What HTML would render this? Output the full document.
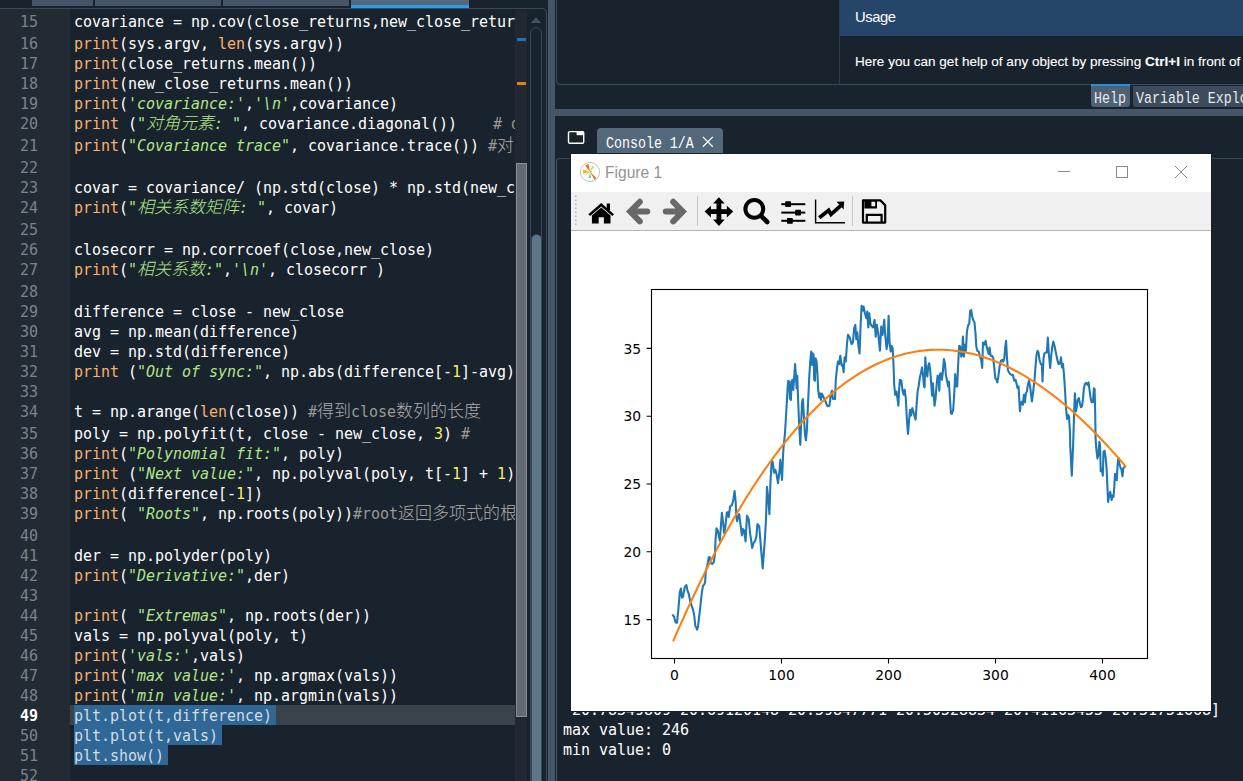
<!DOCTYPE html>
<html lang="zh">
<head>
<meta charset="utf-8">
<title>Spyder - Figure 1</title>
<style>
html,body{margin:0;padding:0;}
body{width:1243px;height:781px;overflow:hidden;background:#19232d;position:relative;font-family:"DejaVu Sans Mono","Liberation Mono","Noto Sans CJK SC",monospace;}
.abs{position:absolute;}
/* editor tabs */
.tab{position:absolute;top:0;height:6px;background:#475667;}
.tab.act{background:#54687b;height:5px;border-bottom:3px solid #2b9cec;}
/* editor frame */
#edframe{position:absolute;left:-10px;top:8px;width:557px;height:790px;border:1px solid #3a4959;border-radius:5px;box-sizing:border-box;}
#gutter{position:absolute;left:0;top:9px;width:70px;height:772px;background:#222a34;}
#gutter .ln{font-size:15px;line-height:22px;color:#7b838b;text-align:right;padding-right:32px;letter-spacing:-0.03px;}
#gutter .ln.cur{color:#ffffff;font-weight:bold;}
#gutpad,#codepad{height:1.5px;}
#code{position:absolute;left:70px;top:9px;width:445px;height:772px;overflow:hidden;color:#ffffff;}
#code .cl{font-size:15px;line-height:22px;white-space:pre;padding-left:4px;letter-spacing:-0.03px;}
#code .cl.curline{background:#3a424b;}
.k{color:#fab16c;}
.s{color:#b0e686;font-style:italic;}
.c{color:#999999;}
.d{color:#faed5c;}
.z{line-height:0;font-weight:300;font-family:"Noto Sans CJK SC","WenQuanYi Zen Hei",sans-serif;font-size:17px;position:relative;top:0.5px;}
.c .z{color:#adadad;}
.sel{background:#2f6796;color:#d4dce4;display:inline-block;height:20px;padding-right:4px;vertical-align:top;}
/* scroll flag area */
#flags{position:absolute;left:515px;top:10px;width:12px;height:771px;background:#222831;}
#flagslider{position:absolute;left:516px;top:163px;width:11px;height:554px;background:#646a72;border:1px solid #8a8f96;box-sizing:border-box;}
/* scrollbar */
#sbgroove{position:absolute;left:530px;top:27px;width:12px;height:780px;border:1px solid #3a4959;border-radius:6px;box-sizing:border-box;}
#sbhandle{position:absolute;left:530.5px;top:233.5px;width:11px;height:600px;background:#5f7689;border:1.5px solid #34475a;box-sizing:border-box;border-radius:6px;}
/* splitters */
#vsplit{position:absolute;left:548px;top:0;width:7px;height:781px;background:#465567;}
#hsplit{position:absolute;left:555px;top:109px;width:688px;height:7px;background:#465567;}
/* help pane */
#helpframe{position:absolute;left:556px;top:-6px;width:700px;height:90.5px;border:1px solid #3a4959;border-radius:4px;box-sizing:border-box;}
#usagehead{position:absolute;left:840px;top:0;width:403px;height:36px;background:#254569;}
#usageleft{position:absolute;left:839px;top:0;width:1px;height:84px;background:#2e3d4c;}
#usagetitle{position:absolute;left:855px;top:7px;letter-spacing:-0.45px;font-family:"Liberation Sans",sans-serif;font-size:14.8px;color:#ffffff;line-height:20px;}
#usagetext{position:absolute;left:855px;top:52px;-webkit-text-stroke:0.1px #fff;font-family:"Liberation Sans",sans-serif;font-size:13.55px;color:#ffffff;line-height:20px;white-space:pre;}
/* bottom tabs of help pane */
.btab{position:absolute;top:86px;height:21px;font-family:"Liberation Mono",monospace;font-size:13.3px;line-height:22px;color:#e6ebf0;white-space:pre;background:#3d4b5b;border-radius:0 0 3px 3px;}
#tabhelp{left:1091px;width:39px;background:#4f6174;border-top:2px solid #2a8fdc;box-sizing:border-box;top:84px;height:23px;padding-left:3px;}
#tabvar{left:1133px;width:120px;padding-left:3px;}
.btab span{display:inline-block;transform:scaleY(1.225) translateY(2.2px);transform-origin:50% 60%;}
/* console */
#constab{position:absolute;left:597px;top:128px;width:126px;height:30px;background:#54687b;border-radius:4px 4px 0 0;}
#constab span{position:absolute;left:9px;top:6.3px;transform:scaleY(1.27);transform-origin:50% 60%;font-family:"Liberation Mono",monospace;font-size:13.3px;line-height:22px;color:#ffffff;white-space:pre;}
#consframe{position:absolute;left:556px;top:158px;width:700px;height:640px;border:1px solid #3a4959;border-left-color:#44546a;border-radius:4px;box-sizing:border-box;}
.cons{position:absolute;left:563px;font-size:15px;line-height:20px;color:#ffffff;white-space:pre;letter-spacing:-0.03px;}
/* figure window */
#fig{position:absolute;left:570px;top:153px;width:642px;height:559px;background:#ffffff;border:1px solid #18212a;box-sizing:border-box;}
#figtitle{position:absolute;left:0;top:0;width:640px;height:38px;background:#ffffff;}
#figtitle .t{position:absolute;left:34px;top:8px;font-family:"Liberation Sans",sans-serif;font-size:15.6px;line-height:22px;color:#949494;}
#figtool{position:absolute;left:0;top:38px;width:640px;height:38px;background:#f0f0f0;border-bottom:1px solid #b4b4b4;}
#canvas{position:absolute;left:0;top:77px;width:640px;height:480px;background:#fff;}
</style>
</head>
<body>
<!-- editor tabs -->
<div class="tab" style="left:32px;width:61px"></div>
<div class="tab" style="left:95px;width:126px"></div>
<div class="tab" style="left:223px;width:126px"></div>
<div class="tab act" style="left:351px;width:118px"></div>

<div id="gutter"><div id="gutpad"></div>
<div class="ln" style="height:22px">15</div>
<div class="ln" style="height:20px">16</div>
<div class="ln" style="height:20px">17</div>
<div class="ln" style="height:20px">18</div>
<div class="ln" style="height:20px">19</div>
<div class="ln" style="height:22px">20</div>
<div class="ln" style="height:22px">21</div>
<div class="ln" style="height:20px">22</div>
<div class="ln" style="height:20px">23</div>
<div class="ln" style="height:22px">24</div>
<div class="ln" style="height:20px">25</div>
<div class="ln" style="height:20px">26</div>
<div class="ln" style="height:22px">27</div>
<div class="ln" style="height:20px">28</div>
<div class="ln" style="height:20px">29</div>
<div class="ln" style="height:20px">30</div>
<div class="ln" style="height:20px">31</div>
<div class="ln" style="height:20px">32</div>
<div class="ln" style="height:20px">33</div>
<div class="ln" style="height:22px">34</div>
<div class="ln" style="height:20px">35</div>
<div class="ln" style="height:20px">36</div>
<div class="ln" style="height:20px">37</div>
<div class="ln" style="height:20px">38</div>
<div class="ln" style="height:22px">39</div>
<div class="ln" style="height:20px">40</div>
<div class="ln" style="height:20px">41</div>
<div class="ln" style="height:20px">42</div>
<div class="ln" style="height:20px">43</div>
<div class="ln" style="height:20px">44</div>
<div class="ln" style="height:20px">45</div>
<div class="ln" style="height:20px">46</div>
<div class="ln" style="height:20px">47</div>
<div class="ln" style="height:20px">48</div>
<div class="ln cur" style="height:20px">49</div>
<div class="ln" style="height:20px">50</div>
<div class="ln" style="height:20px">51</div>
<div class="ln" style="height:20px">52</div>
</div>
<div id="code"><div id="codepad"></div>
<div class="cl" style="height:22px">covariance = np.cov(close_returns,new_close_returns) <span class="c">#<span class="z">协方差</span></span></div>
<div class="cl" style="height:20px"><span class="k">print</span>(sys.argv, <span class="k">len</span>(sys.argv))</div>
<div class="cl" style="height:20px"><span class="k">print</span>(close_returns.mean())</div>
<div class="cl" style="height:20px"><span class="k">print</span>(new_close_returns.mean())</div>
<div class="cl" style="height:20px"><span class="k">print</span>(<span class="s">'covariance:'</span>,<span class="s">'\n'</span>,covariance)</div>
<div class="cl" style="height:22px"><span class="k">print</span> (<span class="s">"<span class="z">对角元素</span>: "</span>, covariance.diagonal())    <span class="c"># diagonal <span class="z">对角线</span></span></div>
<div class="cl" style="height:22px"><span class="k">print</span>(<span class="s">"Covariance trace"</span>, covariance.trace()) <span class="c">#<span class="z">对角线元素和</span></span></div>
<div class="cl" style="height:20px"></div>
<div class="cl" style="height:20px">covar = covariance/ (np.std(close) * np.std(new_close))</div>
<div class="cl" style="height:22px"><span class="k">print</span>(<span class="s">"<span class="z">相关系数矩阵</span>: "</span>, covar)</div>
<div class="cl" style="height:20px"></div>
<div class="cl" style="height:20px">closecorr = np.corrcoef(close,new_close)</div>
<div class="cl" style="height:22px"><span class="k">print</span>(<span class="s">"<span class="z">相关系数</span>:"</span>,<span class="s">'\n'</span>, closecorr )</div>
<div class="cl" style="height:20px"></div>
<div class="cl" style="height:20px">difference = close - new_close</div>
<div class="cl" style="height:20px">avg = np.mean(difference)</div>
<div class="cl" style="height:20px">dev = np.std(difference)</div>
<div class="cl" style="height:20px"><span class="k">print</span> (<span class="s">"Out of sync:"</span>, np.abs(difference[-<span class="d">1</span>]-avg)/dev)</div>
<div class="cl" style="height:20px"></div>
<div class="cl" style="height:22px">t = np.arange(<span class="k">len</span>(close)) <span class="c">#<span class="z">得到</span>close<span class="z">数列的长度</span></span></div>
<div class="cl" style="height:20px">poly = np.polyfit(t, close - new_close, <span class="d">3</span>) <span class="c">#</span></div>
<div class="cl" style="height:20px"><span class="k">print</span>(<span class="s">"Polynomial fit:"</span>, poly)</div>
<div class="cl" style="height:20px"><span class="k">print</span> (<span class="s">"Next value:"</span>, np.polyval(poly, t[-<span class="d">1</span>] + <span class="d">1</span>))</div>
<div class="cl" style="height:20px"><span class="k">print</span>(difference[-<span class="d">1</span>])</div>
<div class="cl" style="height:22px"><span class="k">print</span>( <span class="s">"Roots"</span>, np.roots(poly))<span class="c">#root<span class="z">返回多项式的根</span></span></div>
<div class="cl" style="height:20px"></div>
<div class="cl" style="height:20px">der = np.polyder(poly)</div>
<div class="cl" style="height:20px"><span class="k">print</span>(<span class="s">"Derivative:"</span>,der)</div>
<div class="cl" style="height:20px"></div>
<div class="cl" style="height:20px"><span class="k">print</span>( <span class="s">"Extremas"</span>, np.roots(der))</div>
<div class="cl" style="height:20px">vals = np.polyval(poly, t)</div>
<div class="cl" style="height:20px"><span class="k">print</span>(<span class="s">'vals:'</span>,vals)</div>
<div class="cl" style="height:20px"><span class="k">print</span>(<span class="s">'max value:'</span>, np.argmax(vals))</div>
<div class="cl" style="height:20px"><span class="k">print</span>(<span class="s">'min value:'</span>, np.argmin(vals))</div>
<div class="cl curline" style="height:20px"><span class="sel">plt.plot(t,difference)</span></div>
<div class="cl" style="height:20px"><span class="sel">plt.plot(t,vals)</span></div>
<div class="cl" style="height:20px"><span class="sel">plt.show()</span></div>
<div class="cl" style="height:20px"></div>
</div>
<div id="flags"></div>
<div class="abs" style="left:517px;top:38px;width:9px;height:3px;background:#1c74c0"></div>
<div class="abs" style="left:517px;top:82px;width:9px;height:3px;background:#e67e17"></div>
<div id="flagslider"></div>
<div id="sbgroove"></div>
<svg class="abs" style="left:529px;top:15px" width="14" height="10" viewBox="0 0 14 10"><path d="M1.8 8 L7 2.6 L12.2 8 Z" fill="#445364"/></svg>
<div id="sbhandle"></div>
<div id="edframe"></div>

<div id="vsplit"></div>
<div id="hsplit"></div>

<!-- help pane -->
<div id="helpframe"></div>
<div id="usagehead"></div>
<div id="usageleft"></div>
<div id="usagetitle">Usage</div>
<div id="usagetext">Here you can get help of any object by pressing <b>Ctrl+I</b> in front of it, either on the Editor or the Console.</div>
<div class="btab" id="tabhelp"><span>Help</span></div>
<div class="btab" id="tabvar"><span>Variable Explorer</span></div>

<!-- console -->
<svg class="abs" style="left:567px;top:130px" width="19" height="15" viewBox="0 0 19 15"><rect x="1.5" y="1.6" width="15.2" height="11.6" rx="1.2" fill="none" stroke="#fff" stroke-width="1.4"/><rect x="9.6" y="1.6" width="7" height="3.6" fill="#fff"/></svg>
<div id="constab"><span>Console 1/A</span>
<svg class="abs" style="left:104.3px;top:6.8px" width="13.3" height="13.3" viewBox="0 0 14 14"><path d="M2 2 L12.4 12.4 M12.4 2 L2 12.4" stroke="#fff" stroke-width="1.4" fill="none"/></svg>
</div>
<div id="consframe"></div>
<div class="cons" style="top:699.5px"> 20.78349809 20.69120148 20.59847771 20.50528834 20.41163455 20.31751668]</div>
<div class="cons" style="top:719.5px">max value: 246</div>
<div class="cons" style="top:739.5px">min value: 0</div>

<!-- matplotlib figure window -->
<div id="fig">
 <div id="figtitle"><svg width="640" height="38" viewBox="571 154 640 38" style="position:absolute;left:0;top:0;display:block">
<!-- matplotlib logo -->
<circle cx="590" cy="172" r="9.6" fill="#fff" stroke="#c4c4c4" stroke-width="1"/>
<path d="M590.2 172.2 L585.2 165.6 L588.4 164 Z" fill="#f26a0c"/>
<path d="M590 172.2 L582.8 173.4 L583.4 169.4 Z" fill="#fbb30b"/>
<path d="M589.6 171.6 L596.4 178 L594.6 179.8 Z" fill="#f26a0c"/>
<path d="M590 172 L592 165.8 L594 167 Z" fill="#b7e33a"/>
<path d="M590 172 L591 178 L588.6 178 Z" fill="#6fd46c"/>
<path d="M590 172 L586.4 174.8 L586 174 Z" fill="#6fd4c8"/>
<circle cx="591" cy="171.6" r="0.7" fill="#3b6fd8"/>
<!-- window controls -->
<g fill="none" stroke="#8a8a8a" stroke-width="1">
<path d="M1058 171.5 L1070 171.5"/>
<rect x="1116.5" y="166.5" width="11" height="11"/>
<path d="M1175 166 L1187 178 M1187 166 L1175 178"/>
</g>
</svg>
<span class="t">Figure 1</span>
 </div>
 <div id="figtool"><svg width="640" height="38" viewBox="571 192 640 38" style="position:absolute;left:0;top:0;display:block">
<!-- grip -->
<g fill="#b9b9b9"><rect x="575" y="195.5" width="1.6" height="1.6"/><rect x="575" y="199.5" width="1.6" height="1.6"/><rect x="575" y="203.5" width="1.6" height="1.6"/><rect x="575" y="207.5" width="1.6" height="1.6"/><rect x="575" y="211.5" width="1.6" height="1.6"/><rect x="575" y="215.5" width="1.6" height="1.6"/><rect x="575" y="219.5" width="1.6" height="1.6"/><rect x="575" y="223.5" width="1.6" height="1.6"/></g>
<!-- home -->
<g fill="#000">
<path d="M588.4 214.2 L601.2 203 L614 214.2 L612.3 216.1 L601.2 206.5 L590.1 216.1 Z"/>
<path d="M591.9 215.6 L601.2 207.6 L610.5 215.6 L610.5 223.5 L603.9 223.5 L603.9 217.3 L598.7 217.3 L598.7 223.5 L591.9 223.5 Z"/>
<rect x="606.7" y="203.5" width="3.3" height="6.5"/>
</g>
<!-- back / forward -->
<g fill="none" stroke="#686868" stroke-width="6" stroke-linecap="round" stroke-linejoin="miter">
<path d="M639.8 201.8 L630.2 211.6 L639.8 221.4 M631 211.6 L647.2 211.6"/>
<path d="M673.2 201.8 L682.8 211.6 L673.2 221.4 M682 211.6 L665.8 211.6"/>
</g>
<!-- separators -->
<rect x="697" y="196" width="1" height="30" fill="#c6c6c6"/>
<rect x="852" y="196" width="1" height="30" fill="#c6c6c6"/>
<!-- move -->
<g fill="#000">
<rect x="716.5" y="202" width="4.8" height="19.2"/>
<rect x="709.3" y="209.2" width="19.2" height="4.8"/>
<path d="M718.9 197.3 L724.7 203.6 L713.1 203.6 Z"/>
<path d="M718.9 225.9 L724.7 219.6 L713.1 219.6 Z"/>
<path d="M704.6 211.6 L710.9 205.8 L710.9 217.4 Z"/>
<path d="M733.2 211.6 L726.9 205.8 L726.9 217.4 Z"/>
</g>
<!-- zoom -->
<g fill="none" stroke="#000">
<circle cx="754.3" cy="208.9" r="8.9" stroke-width="4"/>
<path d="M761 215.8 L767.2 222" stroke-width="4.6" stroke-linecap="round"/>
</g>
<!-- sliders -->
<g fill="#000">
<rect x="781.3" y="203.2" width="24" height="2"/><rect x="781.3" y="211.6" width="24" height="2"/><rect x="781.3" y="219.8" width="24" height="2"/>
<rect x="785.2" y="201.3" width="5.8" height="5.8" rx="0.8"/><rect x="795.2" y="209.7" width="5.8" height="5.8" rx="0.8"/><rect x="787" y="217.9" width="5.8" height="5.8" rx="0.8"/>
</g>
<!-- chart -->
<g fill="none" stroke="#000">
<path d="M815.6 199.5 L815.6 222.7 L845 222.7" stroke-width="1.4"/>
<path d="M819.3 217.8 L828.6 210.3 L831 214.4 L840.8 205.6" stroke-width="3.8"/>
</g>
<path d="M836.6 201.8 L844.2 201.6 L843.6 209.4 Z" fill="#000"/>
<!-- save -->
<g>
<path d="M863 200.4 L880.4 200.4 L885.2 205.2 L885.2 222.6 L863 222.6 Z" fill="none" stroke="#000" stroke-width="2.2" stroke-linejoin="round"/>
<path d="M864.4 201 L877 201 L877 208.4 L864.4 208.4 Z M871.4 201.4 L871.4 206.2 L875.2 206.2 L875.2 201.4 Z" fill="#000" fill-rule="evenodd"/>
<path d="M866.8 222.2 L866.8 214.8 L881.6 214.8 L881.6 222.2" fill="none" stroke="#000" stroke-width="2.2"/>
</g>
</svg>
</div>
 <div id="canvas">
<svg width="640" height="480" viewBox="0 0 640 480" style="position:absolute;left:0;top:0;display:block">
<rect x="0" y="0" width="640" height="480" fill="#ffffff"/>
<g fill="none" stroke-linejoin="round" stroke-linecap="square"><path d="M102.0 384.4 L103.2 386.2 L104.6 391.4 L106.0 391.8 L107.4 378.0 L108.8 361.1 L109.9 357.6 L110.9 366.7 L111.9 366.0 L113.7 356.2 L115.4 354.1 L116.5 359.7 L117.7 362.5 L119.4 371.0 L122.2 379.4 L123.3 385.1 L124.3 394.9 L125.3 396.3 L126.1 398.7 L127.1 394.9 L129.2 376.6 L130.9 361.1 L132.0 354.8 L133.0 353.8 L134.1 351.3 L134.8 340.0 L136.3 334.4 L137.7 326.6 L138.6 325.9 L139.8 332.2 L141.2 332.9 L142.6 331.5 L143.6 325.9 L143.9 323.4 L144.6 307.9 L145.5 297.3 L146.7 299.4 L148.8 309.6 L149.8 296.6 L150.9 281.8 L152.0 291.0 L153.2 302.2 L154.4 295.2 L155.8 281.8 L156.8 281.1 L157.7 286.0 L159.1 275.5 L160.8 274.1 L162.2 269.8 L163.6 260.0 L164.7 271.3 L165.3 285.3 L166.1 290.3 L167.2 285.3 L168.2 283.2 L169.2 291.0 L170.9 304.4 L172.0 298.0 L173.0 299.4 L174.6 310.4 L175.3 296.6 L176.0 284.6 L177.7 288.2 L179.1 302.2 L181.2 317.0 L182.6 312.1 L184.4 309.3 L185.4 305.1 L186.4 293.1 L188.2 295.2 L189.6 312.1 L191.7 337.5 L193.9 307.9 L195.0 288.2 L196.0 255.8 L197.1 265.6 L198.4 283.2 L199.5 250.1 L200.5 233.2 L201.6 230.4 L203.0 241.7 L204.4 238.9 L205.5 243.1 L207.0 252.2 L208.6 238.9 L209.3 228.8 L211.0 249.0 L212.0 225.4 L212.6 215.4 L214.0 202.1 L215.3 180.5 L216.6 157.2 L217.3 149.7 L218.3 150.6 L218.9 167.2 L219.9 168.9 L220.6 150.6 L221.4 148.9 L222.3 158.9 L223.1 147.3 L224.1 133.1 L224.9 145.6 L225.6 157.2 L226.3 144.8 L226.9 163.9 L228.1 192.2 L229.3 213.8 L230.3 188.8 L231.1 170.5 L231.9 168.0 L232.8 183.8 L233.9 202.1 L234.9 209.3 L235.9 198.8 L236.9 175.5 L238.1 148.9 L239.2 130.6 L240.2 120.6 L241.1 133.9 L241.7 122.3 L242.6 124.0 L243.2 148.9 L243.9 149.7 L244.6 127.3 L245.6 130.6 L246.4 142.3 L247.2 158.9 L248.2 166.4 L248.9 162.2 L249.9 168.9 L250.9 162.6 L252.2 165.5 L253.9 168.9 L255.5 173.0 L256.5 175.2 L258.5 174.7 L259.7 163.9 L260.9 159.7 L261.9 168.0 L263.5 167.2 L264.0 168.0 L264.8 148.8 L266.0 137.2 L267.0 130.5 L268.2 133.0 L269.3 124.7 L270.7 134.7 L271.7 133.9 L272.6 141.3 L273.6 126.4 L274.8 130.5 L276.0 112.2 L277.0 103.9 L278.6 106.4 L280.6 113.1 L282.0 111.4 L283.1 97.3 L284.3 93.9 L285.3 108.1 L286.3 101.4 L287.3 113.9 L288.6 122.5 L289.6 93.9 L290.6 74.8 L291.6 79.8 L292.6 75.6 L293.9 82.3 L295.3 87.3 L296.3 80.6 L297.3 96.4 L298.3 82.3 L299.3 92.3 L300.6 94.8 L302.3 96.4 L303.6 88.9 L304.7 105.6 L305.9 93.9 L307.2 102.3 L308.9 119.7 L310.2 95.6 L311.6 103.9 L313.2 88.9 L314.2 103.9 L315.6 118.1 L316.6 110.6 L317.6 84.8 L318.6 112.2 L319.7 120.5 L320.5 114.7 L321.7 117.2 L322.5 133.9 L323.2 153.8 L324.2 163.8 L325.5 160.5 L326.5 168.0 L327.4 174.6 L328.2 157.1 L328.9 148.8 L329.0 148.8 L330.3 149.7 L331.7 160.5 L332.7 163.8 L333.7 158.8 L334.8 167.1 L336.0 190.4 L337.0 202.9 L338.0 190.4 L339.0 178.8 L340.0 184.6 L341.3 177.1 L342.3 180.4 L343.6 185.4 L344.6 188.8 L345.6 173.8 L346.6 160.5 L347.6 155.5 L349.0 145.5 L350.0 142.2 L351.0 136.4 L352.0 143.9 L353.0 155.5 L353.6 156.3 L354.3 126.4 L355.3 140.5 L356.3 145.5 L357.3 134.7 L358.3 132.2 L359.3 140.5 L360.3 153.8 L361.1 164.6 L361.9 152.2 L362.9 167.1 L363.6 174.6 L364.6 167.1 L365.6 153.8 L366.6 144.7 L367.6 147.2 L368.3 159.7 L368.9 143.0 L369.9 142.2 L370.9 148.8 L371.9 140.5 L372.9 128.1 L373.9 132.2 L374.9 143.9 L376.2 150.5 L377.2 155.5 L377.9 150.5 L378.9 167.1 L379.9 182.1 L380.9 182.9 L382.2 178.8 L383.2 163.8 L384.2 143.0 L385.2 155.5 L386.2 155.5 L387.2 132.2 L388.2 114.7 L389.2 115.6 L390.2 125.6 L391.0 123.9 L391.9 105.6 L392.9 125.6 L393.9 113.9 L394.9 119.7 L395.9 100.6 L397.2 94.0 L398.2 93.1 L399.2 79.8 L400.2 79.0 L401.2 85.6 L402.2 89.0 L403.5 91.5 L404.5 102.3 L405.3 115.6 L406.3 119.8 L407.7 120.6 L409.0 125.6 L410.3 129.8 L411.2 136.9 L412.0 111.5 L413.1 114.0 L414.6 109.8 L415.6 115.6 L416.6 118.9 L417.6 123.1 L418.6 116.5 L419.6 124.8 L421.0 124.8 L422.3 127.3 L423.3 137.2 L424.3 147.2 L425.3 148.1 L426.3 151.4 L427.3 145.6 L428.6 135.6 L429.9 129.8 L431.3 128.9 L432.3 130.6 L433.3 127.3 L434.3 115.6 L435.1 109.8 L435.9 125.6 L436.9 138.9 L437.9 141.4 L439.3 143.1 L440.6 143.9 L441.9 143.9 L443.3 149.7 L444.6 148.9 L445.6 153.0 L446.6 157.2 L447.6 155.5 L448.4 170.5 L448.9 180.2 L449.9 172.2 L450.9 170.5 L451.9 173.8 L452.9 163.9 L453.9 171.3 L454.9 162.2 L455.9 160.5 L456.9 153.9 L457.9 149.7 L458.9 153.9 L459.9 162.2 L460.9 170.5 L462.2 160.5 L463.5 148.9 L464.5 135.6 L465.5 123.9 L466.5 119.8 L467.5 121.4 L468.5 128.9 L469.9 133.1 L470.9 133.9 L471.5 150.5 L472.5 127.3 L473.5 122.3 L474.9 121.4 L475.9 121.4 L476.8 106.5 L477.8 122.3 L479.2 136.9 L480.3 123.9 L481.3 115.6 L482.3 110.6 L483.7 115.6 L485.0 122.3 L486.3 128.9 L487.6 133.1 L489.0 132.3 L490.0 126.4 L491.0 136.4 L492.0 133.1 L493.0 143.9 L494.0 158.9 L495.0 177.2 L496.0 188.0 L497.0 183.8 L498.0 185.5 L499.0 202.1 L499.2 214.6 L500.8 244.7 L502.1 214.6 L502.6 198.8 L503.3 177.2 L503.9 162.2 L504.8 180.5 L505.6 177.2 L506.6 168.9 L507.9 167.2 L508.9 172.2 L509.9 176.3 L510.9 175.5 L511.9 168.9 L512.9 157.2 L513.9 153.1 L515.3 151.9 L516.6 153.9 L517.6 151.4 L518.6 159.7 L519.6 167.2 L520.6 171.3 L521.9 171.3 L522.9 157.2 L523.6 158.0 L524.2 182.2 L524.6 208.2 L525.4 218.4 L526.4 227.4 L527.4 223.6 L528.4 210.8 L529.1 214.6 L529.7 240.2 L530.7 237.6 L531.8 244.7 L532.5 221.0 L533.5 219.7 L534.6 226.1 L535.6 237.6 L536.4 255.6 L537.1 270.9 L538.2 264.5 L539.2 260.7 L539.9 264.5 L540.7 269.0 L541.5 264.5 L542.5 265.8 L543.3 255.6 L544.0 242.8 L545.1 245.3 L545.8 249.2 L546.6 233.8 L547.4 226.8 L548.4 232.5 L549.4 236.4 L550.4 238.3 L551.5 245.3 L552.2 237.6 L553.0 236.4 L553.8 235.7" stroke="#1f77b4" stroke-width="2.08"/><path d="M102.5 409.5 L106.3 400.7 L110.1 392.1 L113.9 383.7 L117.7 375.4 L121.5 367.2 L125.3 359.2 L129.1 351.3 L132.9 343.6 L136.6 336.0 L140.4 328.6 L144.2 321.2 L148.0 314.1 L151.8 307.1 L155.6 300.2 L159.4 293.4 L163.2 286.8 L167.0 280.3 L170.8 274.0 L174.6 267.8 L178.4 261.7 L182.2 255.8 L186.0 250.0 L189.8 244.4 L193.6 238.8 L197.4 233.5 L201.1 228.2 L204.9 223.1 L208.7 218.1 L212.5 213.2 L216.3 208.5 L220.1 203.9 L223.9 199.4 L227.7 195.0 L231.5 190.8 L235.3 186.7 L239.1 182.8 L242.9 178.9 L246.7 175.2 L250.5 171.6 L254.3 168.1 L258.1 164.8 L261.9 161.6 L265.6 158.5 L269.4 155.5 L273.2 152.6 L277.0 149.9 L280.8 147.3 L284.6 144.8 L288.4 142.4 L292.2 140.1 L296.0 138.0 L299.8 136.0 L303.6 134.0 L307.4 132.2 L311.2 130.6 L315.0 129.0 L318.8 127.5 L322.6 126.2 L326.4 125.0 L330.1 123.9 L333.9 122.8 L337.7 122.0 L341.5 121.2 L345.3 120.5 L349.1 119.9 L352.9 119.5 L356.7 119.1 L360.5 118.9 L364.3 118.7 L368.1 118.7 L371.9 118.8 L375.7 119.0 L379.5 119.3 L383.3 119.7 L387.1 120.1 L390.9 120.7 L394.6 121.4 L398.4 122.2 L402.2 123.1 L406.0 124.1 L409.8 125.2 L413.6 126.4 L417.4 127.7 L421.2 129.1 L425.0 130.6 L428.8 132.2 L432.6 133.9 L436.4 135.6 L440.2 137.5 L444.0 139.5 L447.8 141.5 L451.6 143.7 L455.4 145.9 L459.1 148.3 L462.9 150.7 L466.7 153.2 L470.5 155.8 L474.3 158.5 L478.1 161.3 L481.9 164.2 L485.7 167.1 L489.5 170.2 L493.3 173.3 L497.1 176.5 L500.9 179.8 L504.7 183.2 L508.5 186.7 L512.3 190.2 L516.1 193.9 L519.9 197.6 L523.6 201.4 L527.4 205.3 L531.2 209.2 L535.0 213.3 L538.8 217.4 L542.6 221.6 L546.4 225.9 L550.2 230.2 L554.0 234.7" stroke="#ff7f0e" stroke-width="2.08"/></g>
<rect x="80.5" y="58.5" width="496.0" height="369.0" fill="none" stroke="#000" stroke-width="1.1"/>
<path d="M103.5 427.5 v4.9 M210.5 427.5 v4.9 M317.5 427.5 v4.9 M424.5 427.5 v4.9 M531.5 427.5 v4.9 M80.5 117.4 h-4.9 M80.5 185.2 h-4.9 M80.5 253.0 h-4.9 M80.5 320.8 h-4.9 M80.5 388.6 h-4.9" stroke="#000" stroke-width="1.1" fill="none"/>
<g font-family="DejaVu Sans, Liberation Sans, sans-serif" font-size="13.89px" fill="#000">
<text x="103.5" y="448.6" text-anchor="middle">0</text>
<text x="210.5" y="448.6" text-anchor="middle">100</text>
<text x="317.5" y="448.6" text-anchor="middle">200</text>
<text x="424.5" y="448.6" text-anchor="middle">300</text>
<text x="531.5" y="448.6" text-anchor="middle">400</text>
<text x="70.2" y="122.6" text-anchor="end">35</text>
<text x="70.2" y="190.4" text-anchor="end">30</text>
<text x="70.2" y="258.2" text-anchor="end">25</text>
<text x="70.2" y="326.0" text-anchor="end">20</text>
<text x="70.2" y="393.8" text-anchor="end">15</text>
</g></svg>
 </div>
</div>
</body>
</html>
